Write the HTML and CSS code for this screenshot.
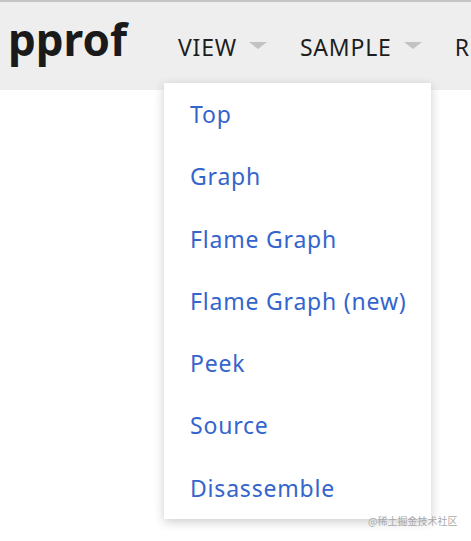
FILE: index.html
```html
<!DOCTYPE html>
<html>
<head>
<meta charset="utf-8">
<link rel="stylesheet" href="styles.css">
</head>
<body>
<header class="header">
  <div class="logo">pprof</div>
  <nav class="nav">
    <div class="nav-item">VIEW <span class="caret"></span></div>
    <div class="nav-item">SAMPLE <span class="caret"></span></div>
    <div class="nav-item">REFINE</div>
  </nav>
</header>
<ul class="menu">
  <li>Top</li>
  <li>Graph</li>
  <li>Flame Graph</li>
  <li>Flame Graph (new)</li>
  <li>Peek</li>
  <li>Source</li>
  <li>Disassemble</li>
</ul>
<div class="watermark">@稀土掘金技术社区</div>
</body>
</html>
```
FILE: styles.css
```css
html, body {
  margin: 0;
  padding: 0;
  background: #ffffff;
  overflow: hidden;
}
body {
  font-family: "Noto Sans", "Open Sans", sans-serif;
  width: 471px;
  height: 541px;
  position: relative;
}
.header {
  box-sizing: border-box;
  height: 90px;
  border-top: 2px solid #c4c4c4;
  background: #eeeeee;
  display: flex;
  align-items: baseline;
  padding: 12px 0 0 8px;
  white-space: nowrap;
  overflow: hidden;
}
.logo {
  font-weight: 700;
  font-size: 44px;
  color: #1a1a1a;
  line-height: 50px;
}
.nav {
  display: flex;
  align-items: baseline;
  gap: 33px;
  margin-left: 51px;
}
.nav-item {
  font-size: 23px;
  letter-spacing: 0.8px;
  color: #1e1e1e;
  display: flex;
  align-items: center;
  gap: 12px;
}
.caret {
  width: 0;
  height: 0;
  margin-top: -4px;
  border-left: 9px solid transparent;
  border-right: 9px solid transparent;
  border-top: 7px solid #c2c2c2;
}
.menu {
  position: absolute;
  left: 164px;
  top: 83px;
  width: 267px;
  margin: 0;
  padding: 0;
  list-style: none;
  background: #ffffff;
  box-shadow: 0 3px 10px rgba(0, 0, 0, 0.2);
}
.menu li {
  height: 62.3px;
  line-height: 62.3px;
  padding-left: 26px;
  font-size: 23px;
  letter-spacing: 0.8px;
  color: #3465cc;
}
.watermark {
  position: absolute;
  left: 368px;
  top: 513px;
  font-family: "Noto Sans CJK SC", sans-serif;
  font-size: 10px;
  color: #a8a8a8;
}
```
